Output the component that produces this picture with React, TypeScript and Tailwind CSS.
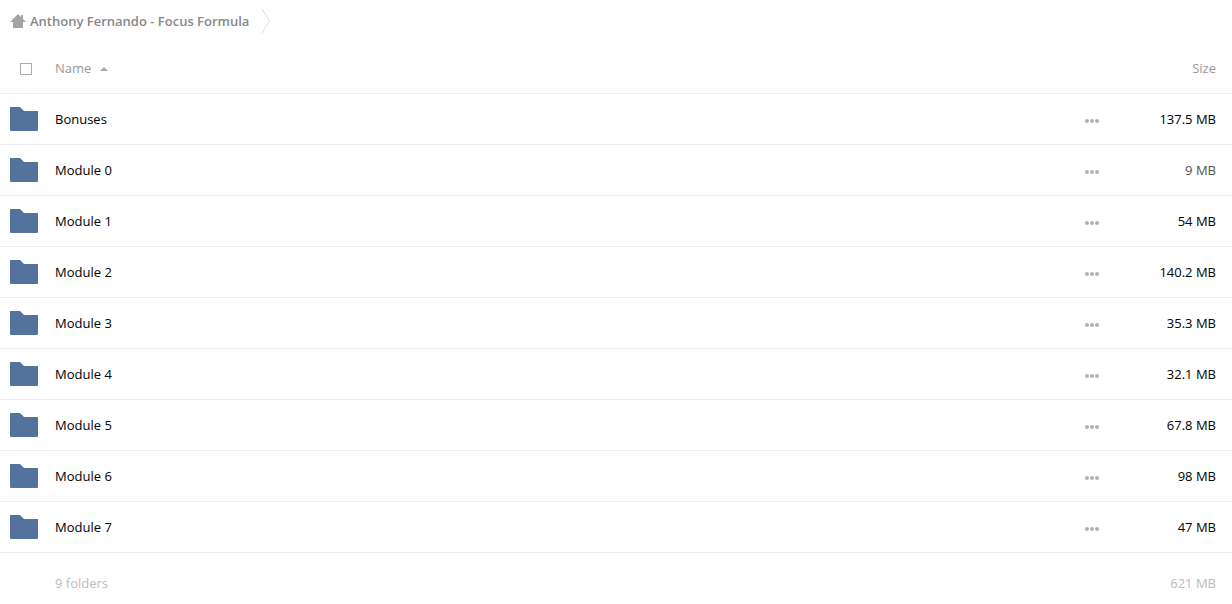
const rows: [string, string, string][] = [
  ['Bonuses', '137.5 MB', 'text-black'],
  ['Module 0', '9 MB', 'text-[#525252]'],
  ['Module 1', '54 MB', 'text-black'],
  ['Module 2', '140.2 MB', 'text-black'],
  ['Module 3', '35.3 MB', 'text-black'],
  ['Module 4', '32.1 MB', 'text-black'],
  ['Module 5', '67.8 MB', 'text-black'],
  ['Module 6', '98 MB', 'text-black'],
  ['Module 7', '47 MB', 'text-black'],
];

function HomeIcon() {
  return (
    <svg width="16" height="14" viewBox="0 0 16 14" fill="#a3a3a3" aria-hidden="true">
      <path d="M8 0 0 8h3v6h10V8h3l-3-3V1h-2v2z" />
    </svg>
  );
}

function FolderIcon() {
  return (
    <svg width="28" height="24" viewBox="0 0 28 24" fill="#54739c" aria-hidden="true">
      <path d="M0 .5a.5.5 0 0 1 .5-.5H10l4 4h13.500a.5.5 0 0 1 .5.5V23a1 1 0 0 1-1 1H1a1 1 0 0 1-1-1z" />
    </svg>
  );
}

function MoreIcon() {
  return (
    <svg width="14" height="4" viewBox="0 0 14 4" fill="#b2b2b2" aria-hidden="true">
      <circle cx="2" cy="2" r="2" />
      <circle cx="7" cy="2" r="2" />
      <circle cx="12" cy="2" r="2" />
    </svg>
  );
}

export default function App() {
  return (
    <main className="bg-white font-['Open_Sans',sans-serif] text-[13px] leading-5 text-black">
      <nav aria-label="Breadcrumb" className="flex h-[42px] items-center pl-[10px]">
        <a href="#" className="flex items-center gap-1 font-semibold text-[#888888]">
          <HomeIcon />
          Anthony Fernando - Focus Formula
        </a>
        <svg className="ml-3" width="10" height="24" viewBox="0 0 10 24" fill="none" stroke="#dddddd" aria-hidden="true">
          <path d="M1 0l7.500 12L1 24" />
        </svg>
      </nav>
      <table className="w-full table-fixed border-collapse">
        <colgroup>
          <col className="w-[55px]" />
          <col />
          <col className="w-[60px]" />
          <col className="w-[110px]" />
        </colgroup>
        <thead>
          <tr className="h-[51px] border-b border-[#eeeeee] text-[#999999]">
            <th className="pt-1 pl-5 text-left">
              <input type="checkbox" aria-label="Select all" className="block size-3 appearance-none border border-[#aaaaaa] bg-white" />
            </th>
            <th className="pt-0.5 text-left font-normal">
              <button type="button" className="flex items-center gap-[9px]">
                Name
                <svg className="mt-0.5" width="8" height="4" viewBox="0 0 8 4" fill="#aaaaaa" aria-hidden="true"><path d="M0 4l4-4 4 4z" /></svg>
              </button>
            </th>
            <th />
            <th className="pt-0.5 pr-4 text-right font-normal">Size</th>
          </tr>
        </thead>
        <tbody>
          {rows.map(([name, size, color]) => (
            <tr key={name} className="h-[51px] border-b border-[#eeeeee]">
              <td className="pl-[10px]"><FolderIcon /></td>
              <td><a href="#">{name}</a></td>
              <td>
                <button type="button" aria-label={`Actions for ${name}`} className="flex h-5 items-center px-[23px] pt-1"><MoreIcon /></button>
              </td>
              <td className={`pr-4 text-right ${color}`}>{size}</td>
            </tr>
          ))}
        </tbody>
        <tfoot>
          <tr className="h-[61px] text-[#bbbbbb]">
            <td />
            <td>9 folders</td>
            <td />
            <td className="pr-4 text-right">621 MB</td>
          </tr>
        </tfoot>
      </table>
    </main>
  );
}
